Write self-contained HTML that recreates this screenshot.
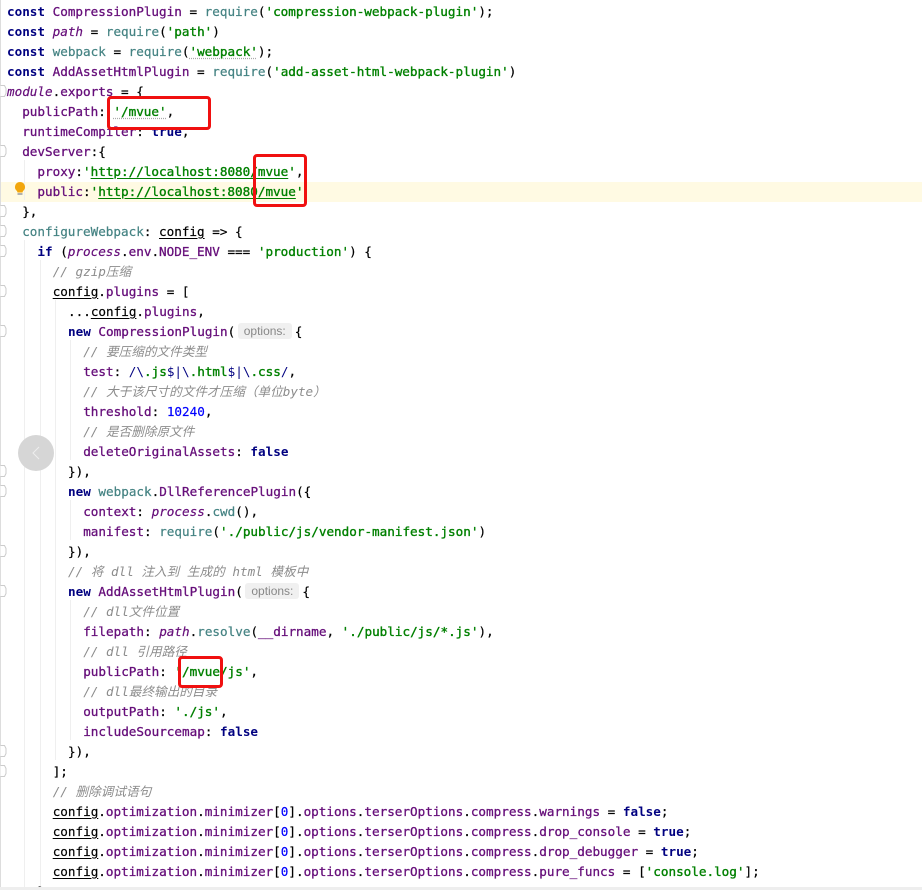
<!DOCTYPE html>
<html><head><meta charset="utf-8"><style>
html,body{margin:0;padding:0;background:#fff}
#p{position:relative;width:922px;height:890px;overflow:hidden;background:#fff;font-family:"DejaVu Sans Mono","Liberation Mono","Noto Sans CJK SC",monospace;font-size:12.64px;color:#000}
.l{position:absolute;left:7px;height:20px;margin-top:1px;line-height:20px;white-space:pre;font-family:"DejaVu Sans Mono","Liberation Mono","Noto Sans CJK SC",monospace;-webkit-text-stroke:.2px currentColor;filter:blur(.3px)}
.k{color:#000080;font-weight:bold;-webkit-text-stroke:0}.s{color:#008000;-webkit-text-stroke:.35px #008000}.p{color:#660E7A;-webkit-text-stroke:.3px #660E7A}
.t{color:#458383}.c{color:#8c8c8c;font-style:italic;-webkit-text-stroke:0}.n{color:#0000FF}.v{color:#660E7A;font-style:italic}
.u{text-decoration:underline;text-underline-offset:2px}.d{text-decoration:underline dotted #aaa;text-underline-offset:2px}
.h{display:inline-block;width:54px;height:16px;line-height:16px;margin:0 3px 0 2.5px;background:#f0f0f0;border-radius:3px;color:#888;font:12px/16px "Liberation Sans",sans-serif;text-align:center;vertical-align:1px;-webkit-text-stroke:0}
.g{position:absolute;width:1px;background:#efefef}
.r{position:absolute;border:3px solid #f01010;border-radius:4px;box-sizing:border-box}
</style></head><body><div id="p">
<div style="position:absolute;left:0;top:182px;width:922px;height:20px;background:#FFFAE3"></div>
<div style="position:absolute;left:0;top:0;width:1px;height:890px;background:#ddd"></div>
<div class="g" style="left:24px;top:160px;height:40px"></div>
<div class="g" style="left:24px;top:240px;height:650px"></div>
<div class="g" style="left:40px;top:260px;height:630px"></div>
<div class="g" style="left:55px;top:300px;height:460px"></div>
<div class="g" style="left:70px;top:340px;height:120px"></div>
<div class="g" style="left:70px;top:500px;height:40px"></div>
<div class="g" style="left:70px;top:600px;height:140px"></div>
<div class="l" style="top:1px"><span class="k">const</span> <span class="p">CompressionPlugin</span> = <span class="t">require</span>(<span class="s">'compression-webpack-plugin'</span>);</div>
<div class="l" style="top:21px"><span class="k">const</span> <span class="v">path</span> = <span class="t">require</span>(<span class="s">'path'</span>)</div>
<div class="l" style="top:41px"><span class="k">const</span> <span class="t">webpack</span> = <span class="t">require</span>(<span class="s d">'webpack'</span>);</div>
<div class="l" style="top:61px"><span class="k">const</span> <span class="p">AddAssetHtmlPlugin</span> = <span class="t">require</span>(<span class="s">'add-asset-html-webpack-plugin'</span>)</div>
<div class="l" style="top:81px"><span class="v">module</span>.<span class="p">exports</span> = {</div>
<div class="l" style="top:101px;left:22.2px"><span class="p">publicPath</span>: <span class="s d">'/mvue'</span>,</div>
<div class="l" style="top:121px;left:22.2px"><span class="p">runtimeCompiler</span>: <span class="k">true</span>,</div>
<div class="l" style="top:141px;left:22.2px"><span class="p">devServer</span>:{</div>
<div class="l" style="top:161px;left:37.4px"><span class="p">proxy</span>:<span class="s">'<span class="u">http://localhost:8080/mvue</span>'</span>,</div>
<div class="l" style="top:181px;left:37.4px"><span class="p">public</span>:<span class="s">'<span class="u">http://localhost:8080/mvue</span>'</span></div>
<div class="l" style="top:201px;left:22.2px">},</div>
<div class="l" style="top:221px;left:22.2px"><span class="t">configureWebpack</span>: <span class="u">config</span> =&gt; {</div>
<div class="l" style="top:241px;left:37.4px"><span class="k">if</span> (<span class="v">process</span>.<span class="p">env</span>.<span class="p">NODE_ENV</span> === <span class="s">'production'</span>) {</div>
<div class="l c" style="top:261px;left:52.7px">// gzip压缩</div>
<div class="l" style="top:281px;left:52.7px"><span class="u">config</span>.<span class="p">plugins</span> = [</div>
<div class="l" style="top:301px;left:68px">...<span class="u">config</span>.<span class="p">plugins</span>,</div>
<div class="l" style="top:321px;left:68px"><span class="k">new</span> <span class="p">CompressionPlugin</span>(<span class="h">options:</span>{</div>
<div class="l c" style="top:341px;left:83.2px">// 要压缩的文件类型</div>
<div class="l" style="top:361px;left:83.2px"><span class="p">test</span>: <span class="k" style="font-weight:normal">/\</span><span class="s">.js</span><span class="k" style="font-weight:normal">$|\</span><span class="s">.html</span><span class="k" style="font-weight:normal">$|\</span><span class="s">.css</span><span class="k" style="font-weight:normal">/</span>,</div>
<div class="l c" style="top:381px;left:83.2px">// 大于该尺寸的文件才压缩（单位byte）</div>
<div class="l" style="top:401px;left:83.2px"><span class="p">threshold</span>: <span class="n">10240</span>,</div>
<div class="l c" style="top:421px;left:83.2px">// 是否删除原文件</div>
<div class="l" style="top:441px;left:83.2px"><span class="p">deleteOriginalAssets</span>: <span class="k">false</span></div>
<div class="l" style="top:461px;left:68px">}),</div>
<div class="l" style="top:481px;left:68px"><span class="k">new</span> <span class="t">webpack</span>.<span class="p">DllReferencePlugin</span>({</div>
<div class="l" style="top:501px;left:83.2px"><span class="p">context</span>: <span class="v">process</span>.<span class="t">cwd</span>(),</div>
<div class="l" style="top:521px;left:83.2px"><span class="p">manifest</span>: <span class="t">require</span>(<span class="s">'./public/js/vendor-manifest.json'</span>)</div>
<div class="l" style="top:541px;left:68px">}),</div>
<div class="l c" style="top:561px;left:68px">// 将 dll 注入到 生成的 html 模板中</div>
<div class="l" style="top:581px;left:68px"><span class="k">new</span> <span class="p">AddAssetHtmlPlugin</span>(<span class="h">options:</span>{</div>
<div class="l c" style="top:601px;left:83.2px">// dll文件位置</div>
<div class="l" style="top:621px;left:83.2px"><span class="p">filepath</span>: <span class="v">path</span>.<span class="t">resolve</span>(<span class="p">__dirname</span>, <span class="s">'./public/js/*.js'</span>),</div>
<div class="l c" style="top:641px;left:83.2px">// dll 引用路径</div>
<div class="l" style="top:661px;left:83.2px"><span class="p">publicPath</span>: <span class="s">'/mvue/js'</span>,</div>
<div class="l c" style="top:681px;left:83.2px">// dll最终输出的目录</div>
<div class="l" style="top:701px;left:83.2px"><span class="p">outputPath</span>: <span class="s">'./js'</span>,</div>
<div class="l" style="top:721px;left:83.2px"><span class="p">includeSourcemap</span>: <span class="k">false</span></div>
<div class="l" style="top:741px;left:68px">}),</div>
<div class="l" style="top:761px;left:52.7px">];</div>
<div class="l c" style="top:781px;left:52.7px">// 删除调试语句</div>
<div class="l" style="top:801px;left:52.7px"><span class="u">config</span>.<span class="p">optimization</span>.<span class="p">minimizer</span>[<span class="n">0</span>].<span class="p">options</span>.<span class="p">terserOptions</span>.<span class="p">compress</span>.<span class="p">warnings</span> = <span class="k">false</span>;</div>
<div class="l" style="top:821px;left:52.7px"><span class="u">config</span>.<span class="p">optimization</span>.<span class="p">minimizer</span>[<span class="n">0</span>].<span class="p">options</span>.<span class="p">terserOptions</span>.<span class="p">compress</span>.<span class="p">drop_console</span> = <span class="k">true</span>;</div>
<div class="l" style="top:841px;left:52.7px"><span class="u">config</span>.<span class="p">optimization</span>.<span class="p">minimizer</span>[<span class="n">0</span>].<span class="p">options</span>.<span class="p">terserOptions</span>.<span class="p">compress</span>.<span class="p">drop_debugger</span> = <span class="k">true</span>;</div>
<div class="l" style="top:861px;left:52.7px"><span class="u">config</span>.<span class="p">optimization</span>.<span class="p">minimizer</span>[<span class="n">0</span>].<span class="p">options</span>.<span class="p">terserOptions</span>.<span class="p">compress</span>.<span class="p">pure_funcs</span> = [<span class="s">'console.log'</span>];</div>
<div class="l" style="top:881px;left:37.4px">}</div>
<div style="position:absolute;left:0;top:887px;width:922px;height:3px;background:#eee"></div>
<svg style="position:absolute;left:0;top:0" width="30" height="890" fill="#fff" stroke="#ccc">
<path d="M0.5 85.5h4l1.5 3v5l-1.5 3h-4"/><path d="M0.5 145.5h4l1.5 3v5l-1.5 3h-4"/><path d="M0.5 205.5h4l1.5 3v5l-1.5 3h-4"/><path d="M0.5 225.5h4l1.5 3v5l-1.5 3h-4"/><path d="M0.5 245.5h4l1.5 3v5l-1.5 3h-4"/><path d="M0.5 285.5h4l1.5 3v5l-1.5 3h-4"/><path d="M0.5 325.5h4l1.5 3v5l-1.5 3h-4"/><path d="M0.5 465.5h4l1.5 3v5l-1.5 3h-4"/><path d="M0.5 485.5h4l1.5 3v5l-1.5 3h-4"/><path d="M0.5 545.5h4l1.5 3v5l-1.5 3h-4"/><path d="M0.5 585.5h4l1.5 3v5l-1.5 3h-4"/><path d="M0.5 745.5h4l1.5 3v5l-1.5 3h-4"/><path d="M0.5 765.5h4l1.5 3v5l-1.5 3h-4"/>
<path fill="#F2A60C" stroke="none" d="M20 182a5 5 0 0 1 3 9l-.5 1.5h-5l-.5-1.5a5 5 0 0 1 3-9z"/><path stroke="#999" stroke-width="1.5" d="M17.5 194h5"/>
</svg>
<div style="position:absolute;left:18px;top:435px;width:36px;height:36px;border-radius:50%;background:#d6d6d6"></div>
<svg style="position:absolute;left:18px;top:435px" width="36" height="36" fill="none" stroke="#eee" stroke-width="1"><path d="M21 12l-6 6 6 6"/></svg>
<div class="r" style="left:107px;top:96px;width:104px;height:34px"></div>
<div class="r" style="left:253px;top:154px;width:54px;height:53px"></div>
<div class="r" style="left:178px;top:656px;width:45px;height:32px"></div>
</div></body></html>
